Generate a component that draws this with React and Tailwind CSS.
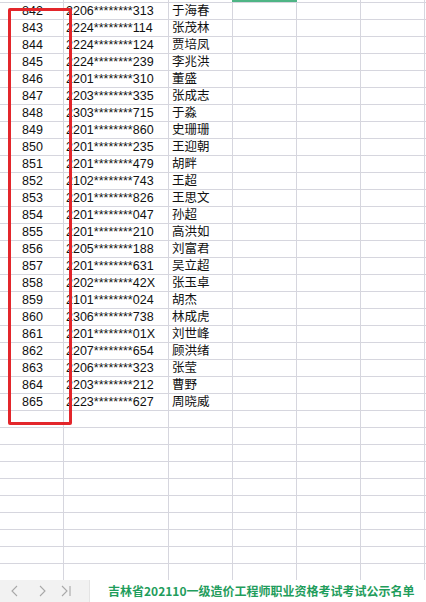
import React from 'react';

const rows = [
  ['842', '2206********313', '于海春'],
  ['843', '2224********114', '张茂林'],
  ['844', '2224********124', '贾培凤'],
  ['845', '2224********239', '李兆洪'],
  ['846', '2201********310', '董盛'],
  ['847', '2203********335', '张成志'],
  ['848', '2303********715', '于淼'],
  ['849', '2201********860', '史珊珊'],
  ['850', '2201********235', '王迎朝'],
  ['851', '2201********479', '胡畔'],
  ['852', '2102********743', '王超'],
  ['853', '2201********826', '王思文'],
  ['854', '2201********047', '孙超'],
  ['855', '2201********210', '高洪如'],
  ['856', '2205********188', '刘富君'],
  ['857', '2201********631', '吴立超'],
  ['858', '2202********42X', '张玉卓'],
  ['859', '2101********024', '胡杰'],
  ['860', '2306********738', '林成虎'],
  ['861', '2201********01X', '刘世峰'],
  ['862', '2207********654', '顾洪绪'],
  ['863', '2206********323', '张莹'],
  ['864', '2203********212', '曹野'],
  ['865', '2223********627', '周晓威'],
];

const emptyRows = Array.from({ length: 10 }, () => ['', '', '']);

const Row = ({ cells, h = 'h-[17px]' }) => (
  <div className={`flex ${h} border-b border-[#d6d6de] text-[12.5px] leading-[15px] text-[#111]`}>
    <div className="w-[64px] shrink-0 border-r border-[#d6d6de] flex items-end justify-center pl-[2px]">
      {cells[0]}
    </div>
    <div className="w-[105px] shrink-0 border-r border-[#d6d6de] flex items-end pl-[2px] whitespace-nowrap">
      {cells[1]}
    </div>
    <div className="w-[64px] shrink-0 border-r border-[#d6d6de] flex items-end pl-[3px] whitespace-nowrap">
      {cells[2]}
    </div>
    <div className="w-[64px] shrink-0 border-r border-[#d6d6de]" />
    <div className="w-[64px] shrink-0 border-r border-[#d6d6de]" />
    <div className="w-[64px] shrink-0 border-r border-[#d6d6de]" />
  </div>
);

const Arrow = ({ d }) => (
  <svg width="10" height="12" viewBox="0 0 10 12" fill="none" stroke="#a8a8a8" strokeWidth="1.1">
    <path d={d} />
  </svg>
);

export default function App() {
  return (
    <div
      className="w-[426px] h-[602px] bg-white overflow-hidden flex flex-col"
      style={{ fontFamily: '"Liberation Sans", "Noto Sans CJK SC", sans-serif' }}
    >
      {/* sheet grid */}
      <div className="relative h-[580px] overflow-hidden">
        <Row cells={['', '', '']} h="h-[3px]" />
        {rows.concat(emptyRows).map((r, i) => (
          <Row key={i} cells={r} />
        ))}

        {/* selected cell top edge */}
        <div className="absolute top-0 left-[232px] w-[65px] h-[2px] bg-[#4fb585]" />

        {/* red highlight box */}
        <div className="absolute left-[8px] top-[8px] w-[64px] h-[417px] border-[3px] border-[#e3262b] rounded-[2px]" />
      </div>

      {/* sheet tabs */}
      <div className="flex h-[22px]">
        <div className="w-[89px] shrink-0 bg-[#f2f2f2] flex items-center">
          <div className="ml-[10px]">
            <Arrow d="M7 1 L2 6 L7 11" />
          </div>
          <div className="ml-[17px]">
            <Arrow d="M3 1 L8 6 L3 11" />
          </div>
          <div className="ml-[14px]">
            <Arrow d="M1 1 L6 6 L1 11 M9 1 L9 11" />
          </div>
        </div>
        <div className="flex-1 bg-white border-l border-[#e4e4e4] flex items-center pl-[18px]">
          <span
            className="text-[12px] font-bold text-[#1f9d5c] whitespace-nowrap"
            style={{ fontFamily: '"Noto Sans CJK SC", sans-serif' }}
          >
            吉林省202110一级造价工程师职业资格考试考试公示名单
          </span>
        </div>
      </div>
    </div>
  );
}
